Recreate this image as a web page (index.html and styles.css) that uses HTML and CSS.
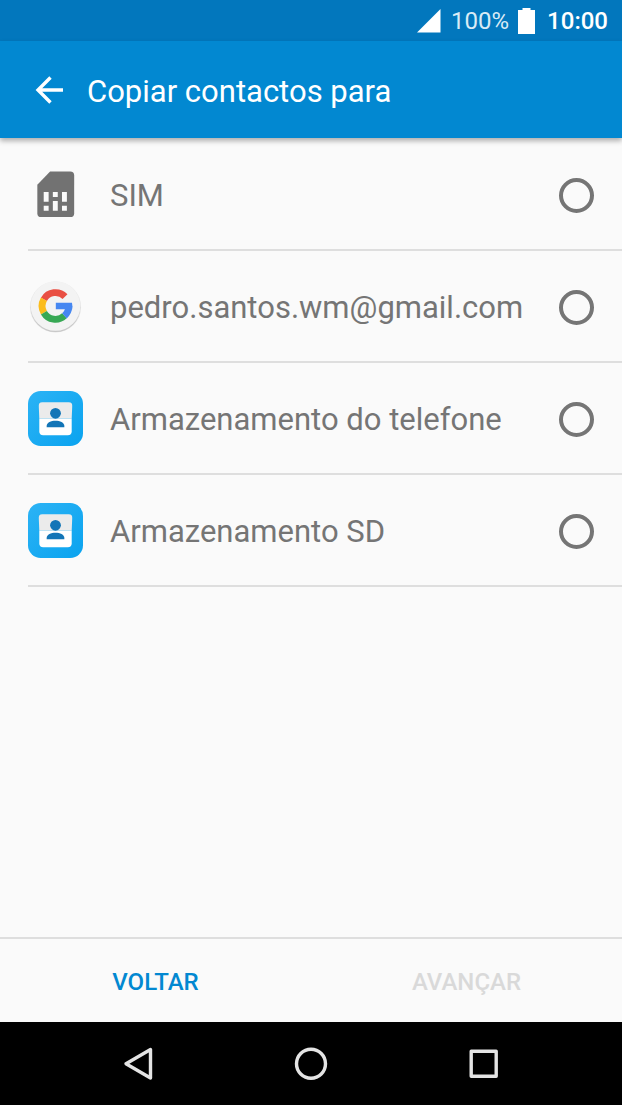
FILE: index.html
```html
<!DOCTYPE html>
<html lang="pt">
<head>
<meta charset="utf-8">
<meta name="viewport" content="width=device-width, initial-scale=1">
<title>Copiar contactos para</title>
<link rel="stylesheet" href="styles.css">
</head>
<body>
<div class="status-bar">
  <svg class="signal" viewBox="0 0 24 24" aria-hidden="true"><path d="M0 23.500 23.500 0V23.500Z" fill="#fff"/></svg>
  <span class="battery-level">100%</span>
  <svg class="battery" viewBox="0 0 17 26" aria-hidden="true"><path d="M4.500 0H12.500V2H17V26H0V2H4.500Z" fill="#fff"/></svg>
  <time class="clock">10:00</time>
</div>
<header class="app-bar">
  <button class="back" type="button" aria-label="Voltar">
    <svg viewBox="0 0 28 28" aria-hidden="true"><path d="M28 14H3M15.500 1.500 3 14l12.500 12.500" fill="none" stroke="#fff" stroke-width="3.400"/></svg>
  </button>
  <h1 class="title">Copiar contactos para</h1>
</header>
<main class="content">
  <label class="option">
    <svg class="option-icon" viewBox="0 0 56 56" aria-hidden="true">
      <path d="M22.500 4.500H43a4 4 0 0 1 4 4V47a4 4 0 0 1-4 4H13.500a4 4 0 0 1-4-4V18Z" fill="#727272"/>
      <path d="M16 25.500h5v10h-5zM25.300 25.500h5v5h-5zM34.600 25.500h5v10h-5zM16 39.500h5v5h-5zM25.300 34.500h5v10h-5zM34.600 39.500h5v5h-5z" fill="#fafafa"/>
    </svg>
    <span class="option-label">SIM</span>
    <input class="option-radio" type="radio" name="destino" value="sim">
  </label>
  <label class="option">
    <svg class="option-icon" viewBox="0 0 56 56" aria-hidden="true">
      <circle cx="28" cy="28.500" r="26" fill="#e4e4e4"/>
      <circle cx="28" cy="28.800" r="25.200" fill="#c8c8c8"/>
      <circle cx="28" cy="27.500" r="25.300" fill="#f3f3f3"/>
      <g fill="none" stroke-width="7">
        <path d="M37.700 17.900A13.600 13.600 0 0 0 16.200 20.700" stroke="#e94f43"/>
        <path d="M16.200 20.700A13.600 13.600 0 0 0 16.200 34.300" stroke="#fbbc1c"/>
        <path d="M16.200 34.300A13.600 13.600 0 0 0 37.100 37.500" stroke="#37a854"/>
        <path d="M37.100 37.500A13.600 13.600 0 0 0 41.600 27.500" stroke="#4687f1"/>
      </g>
      <path d="M28.300 24.200H44.800Q45.500 27.500 45 30.700H28.300Z" fill="#4687f1"/>
    </svg>
    <span class="option-label">pedro.santos.wm@gmail.com</span>
    <input class="option-radio" type="radio" name="destino" value="gmail">
  </label>
  <label class="option">
    <svg class="option-icon" viewBox="0 0 56 56" aria-hidden="true">
      <defs><linearGradient id="tile" x1="0" y1="0" x2="1" y2="1"><stop offset="0" stop-color="#2cb3f5"/><stop offset="1" stop-color="#0aa3ef"/></linearGradient></defs>
      <rect width="56" height="56" rx="13" fill="url(#tile)"/>
      <path d="M11.500 28V41a4 4 0 0 0 4 4h25a4 4 0 0 0 4-4V28Z" fill="#fff"/>
      <path d="M14.500 11.500h27q4 0 3.500 4.500L44.500 28h-33L11 16q-.5-4.500 3.500-4.500Z" fill="#ebebeb"/>
      <circle cx="28" cy="22.700" r="5.500" fill="#1275b7"/>
      <path d="M19 37v-1.500c0-7 18-7 18 0V37Z" fill="#1275b7"/>
    </svg>
    <span class="option-label">Armazenamento do telefone</span>
    <input class="option-radio" type="radio" name="destino" value="telefone">
  </label>
  <label class="option">
    <svg class="option-icon" viewBox="0 0 56 56" aria-hidden="true">
      <rect width="56" height="56" rx="13" fill="url(#tile)"/>
      <path d="M11.500 28V41a4 4 0 0 0 4 4h25a4 4 0 0 0 4-4V28Z" fill="#fff"/>
      <path d="M14.500 11.500h27q4 0 3.500 4.500L44.500 28h-33L11 16q-.5-4.500 3.500-4.500Z" fill="#ebebeb"/>
      <circle cx="28" cy="22.700" r="5.500" fill="#1275b7"/>
      <path d="M19 37v-1.500c0-7 18-7 18 0V37Z" fill="#1275b7"/>
    </svg>
    <span class="option-label">Armazenamento SD</span>
    <input class="option-radio" type="radio" name="destino" value="sd">
  </label>
</main>
<footer class="actions">
  <button class="action" type="button">VOLTAR</button>
  <button class="action" type="button" disabled>AVANÇAR</button>
</footer>
<nav class="nav-bar" aria-label="Sistema">
  <button class="nav-button" type="button" aria-label="Retroceder">
    <svg viewBox="0 0 36 36" aria-hidden="true"><path d="M30.500 3.500V32L6 17.700Z"/></svg>
  </button>
  <button class="nav-button" type="button" aria-label="Início">
    <svg viewBox="0 0 36 36" aria-hidden="true"><circle cx="18" cy="17.700" r="14.500"/></svg>
  </button>
  <button class="nav-button" type="button" aria-label="Recentes">
    <svg viewBox="0 0 36 36" aria-hidden="true"><rect x="5.200" y="5.200" width="25" height="25"/></svg>
  </button>
</nav>
</body>
</html>
```
FILE: styles.css
```css
* {
  box-sizing: border-box;
}

body {
  margin: 0;
  min-height: 100vh;
  display: flex;
  flex-direction: column;
  background: #fafafa;
  font-family: Roboto, "Noto Sans", sans-serif;
}

button {
  border: 0;
  padding: 0;
  background: none;
  font-family: inherit;
}

svg {
  display: block;
}

.status-bar {
  display: flex;
  align-items: center;
  justify-content: flex-end;
  height: 41px;
  padding: 1px 14px 0;
  background: #0277bd;
  color: #fff;
  font-size: 24px;
  line-height: 28px;
}

.signal {
  width: 24px;
  height: 24px;
  margin-right: 10px;
}

.battery-level {
  color: #d9ebf6;
  margin-right: 9px;
}

.battery {
  width: 17px;
  height: 26px;
  margin-right: 12px;
}

.clock {
  font-weight: 500;
}

.app-bar {
  display: flex;
  align-items: center;
  gap: 24px;
  height: 97px;
  padding: 0 35px;
  background: #0288d1;
  box-shadow: 0 3px 5px rgba(0, 0, 0, 0.3);
}

.back svg {
  width: 28px;
  height: 28px;
}

.title {
  margin: 0;
  padding-top: 4px;
  color: #fff;
  font-size: 31px;
  line-height: 36px;
  font-weight: 400;
}

.content {
  flex: 1;
  padding: 1px 0 28px 28px;
}

.option {
  display: flex;
  align-items: center;
  gap: 27px;
  height: 112px;
  padding-right: 28px;
  border-bottom: 2px solid #dedede;
}

.option-icon {
  flex: none;
  width: 55px;
  height: 55px;
}

.option-label {
  flex: 1;
  padding-top: 4px;
  color: #757575;
  font-size: 31px;
  line-height: 36px;
}

.option-radio {
  appearance: none;
  flex: none;
  width: 35px;
  height: 35px;
  margin: 2px 0 0;
  border: 4px solid #757575;
  border-radius: 50%;
}

.option-radio:checked {
  border-color: #0288d1;
  background: radial-gradient(circle, #0288d1 45%, transparent 50%);
}

.actions {
  display: grid;
  grid-template-columns: 1fr 1fr;
  height: 85px;
  border-top: 2px solid #dedede;
}

.action {
  padding-top: 2px;
  color: #0288d1;
  font-size: 24px;
  line-height: 28px;
  font-weight: 500;
}

.action:disabled {
  color: #d9d9d9;
}

.nav-bar {
  display: flex;
  justify-content: center;
  gap: 137px;
  height: 83px;
  background: #000;
}

.nav-button svg {
  width: 36px;
  height: 36px;
  fill: none;
  stroke: #e4e4e4;
  stroke-width: 3.4;
  stroke-linejoin: round;
}
```
